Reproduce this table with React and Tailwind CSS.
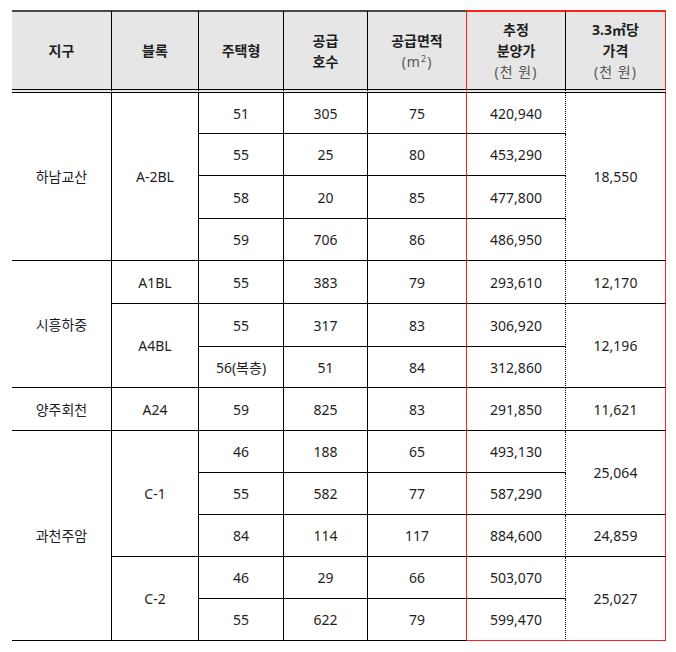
import React from 'react';

const RED = 'border-r-[#ff2020]';

// border on the right side of each column
const rightBorder = [
  'border-r-black',
  'border-r-black',
  'border-r-black',
  'border-r-black',
  RED,
  'border-r-black [border-right-style:dotted]',
  RED,
];

const Cell = ({ col, rs, last, children }) => {
  const bottom = last && col >= 5 ? 'border-b-[#ff2020]' : 'border-b-black';
  return (
    <td
      rowSpan={rs}
      className={`border-b border-r border-solid p-0 text-center align-middle ${rightBorder[col]} ${bottom}`}
    >
      {children}
    </td>
  );
};

const HeadCell = ({ col, children }) => {
  const top = col >= 5 ? 'border-t-[#ff2020]' : 'border-t-[#4a4a4a]';
  const right = col === 5 ? 'border-r-black' : rightBorder[col];
  return (
    <th
      className={`h-[83px] p-0 text-center align-middle bg-[#e6e6e6] border-solid border-t-2 border-r border-b-4 border-b-black [border-bottom-style:double] font-bold leading-[21px] ${top} ${right}`}
    >
      {children}
    </th>
  );
};

const Sub = ({ children }) => <div className="font-normal text-[#555] tracking-[1px]">{children}</div>;

// each row: list of [col, text, rowSpan, reachesBottom]
const rows = [
  [[0, '하남교산', 4], [1, 'A-2BL', 4], [2, '51'], [3, '305'], [4, '75'], [5, '420,940'], [6, '18,550', 4]],
  [[2, '55'], [3, '25'], [4, '80'], [5, '453,290']],
  [[2, '58'], [3, '20'], [4, '85'], [5, '477,800']],
  [[2, '59'], [3, '706'], [4, '86'], [5, '486,950']],
  [[0, '시흥하중', 3], [1, 'A1BL'], [2, '55'], [3, '383'], [4, '79'], [5, '293,610'], [6, '12,170']],
  [[1, 'A4BL', 2], [2, '55'], [3, '317'], [4, '83'], [5, '306,920'], [6, '12,196', 2]],
  [[2, '56(복층)'], [3, '51'], [4, '84'], [5, '312,860']],
  [[0, '양주회천'], [1, 'A24'], [2, '59'], [3, '825'], [4, '83'], [5, '291,850'], [6, '11,621']],
  [[0, '과천주암', 5, true], [1, 'C-1', 3], [2, '46'], [3, '188'], [4, '65'], [5, '493,130'], [6, '25,064', 2]],
  [[2, '55'], [3, '582'], [4, '77'], [5, '587,290']],
  [[2, '84'], [3, '114'], [4, '117'], [5, '884,600'], [6, '24,859']],
  [[1, 'C-2', 2, true], [2, '46'], [3, '29'], [4, '66'], [5, '503,070'], [6, '25,027', 2, true]],
  [[2, '55', 1, true], [3, '622', 1, true], [4, '79', 1, true], [5, '599,470', 1, true]],
];

// row heights as measured from the sheet
const heights = [
  'h-[41px]', 'h-[42px]', 'h-[43px]', 'h-[42px]', 'h-[43px]', 'h-[43px]', 'h-[41px]',
  'h-[43px]', 'h-[42px]', 'h-[42px]', 'h-[42px]', 'h-[42px]', 'h-[42px]',
];

const widths = [100, 87, 85, 84, 99, 99, 100];

export default function App() {
  return (
    <div className="w-[676px] h-[652px] bg-white pt-[10px] pl-[12px] text-[14px] text-[#1e1e1e] font-['Noto_Sans','Noto_Sans_CJK_KR',sans-serif]">
      <table className="table-fixed w-[654px] border-separate border-spacing-0">
        <colgroup>
          {widths.map((w, i) => (
            <col key={i} style={{ width: w }} />
          ))}
        </colgroup>
        <thead>
          <tr>
            <HeadCell col={0}>지구</HeadCell>
            <HeadCell col={1}>블록</HeadCell>
            <HeadCell col={2}>주택형</HeadCell>
            <HeadCell col={3}>
              <div>공급</div>
              <div>호수</div>
            </HeadCell>
            <HeadCell col={4}>
              <div>공급면적</div>
              <Sub>
                (m<sup className="text-[9px]">2</sup>)
              </Sub>
            </HeadCell>
            <HeadCell col={5}>
              <div>추정</div>
              <div>분양가</div>
              <Sub>(천 원)</Sub>
            </HeadCell>
            <HeadCell col={6}>
              <div>3.3㎡당</div>
              <div>가격</div>
              <Sub>(천 원)</Sub>
            </HeadCell>
          </tr>
        </thead>
        <tbody>
          {rows.map((row, i) => (
            <tr key={i} className={heights[i]}>
              {row.map(([col, text, rs, last]) => (
                <Cell key={col} col={col} rs={rs} last={last}>
                  {text}
                </Cell>
              ))}
            </tr>
          ))}
        </tbody>
      </table>
    </div>
  );
}
